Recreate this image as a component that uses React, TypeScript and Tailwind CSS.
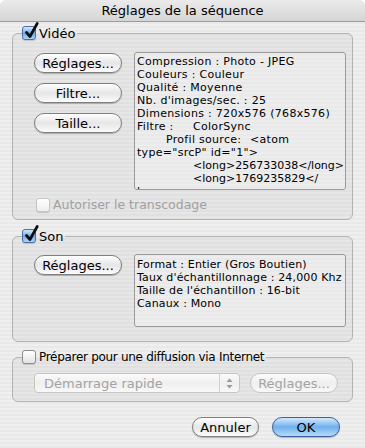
import type { ReactNode } from "react";

const font = "font-['DejaVu_Sans',sans-serif]";

function Check({ checked, disabled }: { checked?: boolean; disabled?: boolean }) {
  const box = checked
    ? "border-[#4d6ea3] bg-linear-to-b from-[#d6eafc] via-[#6fa9e6] to-[#a8d5fa]"
    : disabled
      ? "border-[#c6c6c6] bg-linear-to-b from-white to-[#eeeeee]"
      : "border-[#8d8d8d] bg-linear-to-b from-white to-[#e4e4e4]";
  return (
    <span className={`relative inline-block w-[14px] h-[14px] shrink-0 rounded-[3px] border shadow-[0_1px_1px_rgba(0,0,0,0.15)] ${box}`}>
      {checked && (
        <svg className="absolute left-[1px] -top-[5px]" width="15" height="17" viewBox="0 0 15 17">
          <path d="M2.5 10.5 L6 14.5 L13.2 1.5" stroke="#0d0d0d" strokeWidth="2.7" fill="none" strokeLinecap="round" strokeLinejoin="round" />
        </svg>
      )}
    </span>
  );
}

function Btn({ children, w, disabled }: { children: ReactNode; w: string; disabled?: boolean }) {
  return (
    <div
      className={`${w} h-[20px] flex items-center justify-center rounded-full border text-[13px] leading-none ${
        disabled
          ? "border-[#c4c4c4] text-[#a3a3a3] bg-linear-to-b from-[#fbfbfb] via-[#efefef] to-[#f8f8f8]"
          : "border-[#7f7f7f] text-black bg-linear-to-b from-white via-[#e6e6e6] to-[#fbfbfb] shadow-[0_1px_1px_rgba(0,0,0,0.25)]"
      }`}
    >
      {children}
    </div>
  );
}

function Group({ label, checked, children, pad, small }: { label: string; checked?: boolean; children: ReactNode; pad: string; small?: boolean }) {
  return (
    <fieldset className={`border border-[#b3b3b3] rounded-[6px] bg-black/[0.035] ${pad}`}>
      <legend className={`-ml-[12px] pr-[2px] h-[16px] flex items-center gap-[3px] text-black ${small ? "text-[12px] tracking-[-0.3px]" : "text-[13px]"}`}>
        <Check checked={checked} />
        <span className="leading-none">{label}</span>
      </legend>
      {children}
    </fieldset>
  );
}

export default function App() {
  return (
    <div className={`w-[365px] h-[448px] bg-white ${font}`}>
      <div className="w-full h-full flex flex-col rounded-t-[6px] overflow-hidden bg-[repeating-linear-gradient(180deg,#efefef_0px,#efefef_2px,#e9e9e9_2px,#e9e9e9_4px)]">
        <div className="h-[22px] shrink-0 flex items-center justify-center border-b border-[#9c9c9c] bg-linear-to-b from-[#ebebeb] to-[#d5d5d5] text-[13px] text-black">
          Réglages de la séquence
        </div>

        <div className="px-[12px] pt-[3px] flex flex-col">
          <Group label="Vidéo" checked pad="pl-[21px] pr-[6px] pt-[11px] pb-[7px]">
            <div className="flex gap-[12px]">
              <div className="flex flex-col gap-[10px] pt-[1px]">
                <Btn w="w-[88px]">Réglages...</Btn>
                <Btn w="w-[88px]">Filtre...</Btn>
                <Btn w="w-[88px]">Taille...</Btn>
              </div>
              <div className="w-[212px] h-[138px] overflow-hidden rounded-[3px] border border-[#9a9a9a] bg-white/30 px-[2px] pt-[2px] text-[11px] leading-[13px] tracking-[0.3px] text-black whitespace-pre">
                <div>Compression : Photo - JPEG</div>
                <div>Couleurs : Couleur</div>
                <div>Qualité : Moyenne</div>
                <div>Nb. d'images/sec. : 25</div>
                <div>Dimensions : 720x576 (768x576)</div>
                <div><span className="inline-block w-[56px]">Filtre :</span>ColorSync</div>
                <div><span className="inline-block w-[113px] pl-[29px]">Profil source:</span>&lt;atom</div>
                <div>type="srcP" id="1"&gt;</div>
                <div className="pl-[56px] tracking-normal">&lt;long&gt;256733038&lt;/long&gt;</div>
                <div className="pl-[56px] tracking-normal">&lt;long&gt;1769235829&lt;/</div>
                <div className="tracking-normal">long&gt;</div>
              </div>
            </div>
            <div className="mt-[8px] ml-[2px] flex items-center gap-[3px] text-[12.5px] text-[#a0a0a0] leading-none">
              <Check disabled />
              <span>Autoriser le transcodage</span>
            </div>
          </Group>

          <div className="mt-[8px]">
            <Group label="Son" checked pad="pl-[21px] pr-[6px] pt-[10px] pb-[14px]">
              <div className="flex gap-[12px]">
                <div className="pt-[1px]">
                  <Btn w="w-[88px]">Réglages...</Btn>
                </div>
                <div className="w-[212px] h-[73px] overflow-hidden rounded-[3px] border border-[#9a9a9a] bg-white/30 px-[2px] pt-[3px] text-[11px] leading-[13px] tracking-[0.15px] text-black whitespace-pre">
                  <div>Format : Entier (Gros Boutien)</div>
                  <div>Taux d'échantillonnage : 24,000 Khz</div>
                  <div>Taille de l'échantillon : 16-bit</div>
                  <div>Canaux : Mono</div>
                </div>
              </div>
            </Group>
          </div>

          <div className="mt-[7px]">
            <Group label="Préparer pour une diffusion via Internet" small pad="pl-[21px] pr-[6px] pt-[8px] pb-[8px]">
              <div className="flex gap-[10px]">
                <div className="w-[206px] h-[20px] flex items-center rounded-[4px] border border-[#c6c6c6] bg-linear-to-b from-[#fbfbfb] via-[#efefef] to-[#f8f8f8] text-[13px] text-[#a3a3a3] leading-none">
                  <span className="flex-1 pl-[9px]">Démarrage rapide</span>
                  <span className="w-[20px] h-full flex items-center justify-center border-l border-[#d2d2d2]">
                    <svg width="7" height="11" viewBox="0 0 7 11">
                      <path d="M3.5 0.5 L6.5 4 L0.5 4 Z" fill="#9a9a9a" />
                      <path d="M3.5 10.5 L6.5 7 L0.5 7 Z" fill="#9a9a9a" />
                    </svg>
                  </span>
                </div>
                <Btn w="w-[88px]" disabled>Réglages...</Btn>
              </div>
            </Group>
          </div>

          <div className="mt-[15px] pr-[13px] flex justify-end gap-[13px]">
            <Btn w="w-[67px]">Annuler</Btn>
            <div className="w-[68px] h-[20px] flex items-center justify-center rounded-full border border-[#3d5f9c] bg-linear-to-b from-[#d4e9fc] via-[#6fb0ec] to-[#b5dcfb] shadow-[0_1px_1px_rgba(0,0,0,0.25)] text-[13px] text-black leading-none">
              OK
            </div>
          </div>
        </div>
      </div>
    </div>
  );
}
